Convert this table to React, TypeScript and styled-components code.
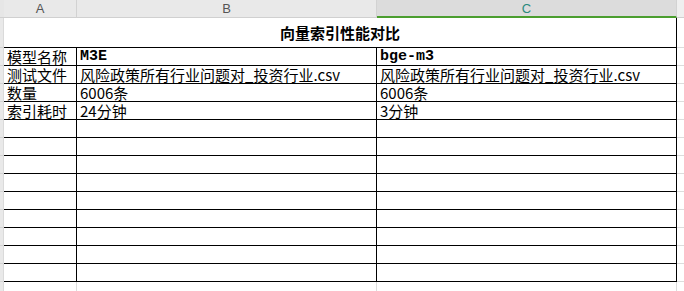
import React from 'react';
import styled, { createGlobalStyle, css } from 'styled-components';

const GlobalStyle = createGlobalStyle`
  *, *::before, *::after {
    box-sizing: border-box;
  }
  body {
    margin: 0;
    background: #ffffff;
    overflow: hidden;
  }
`;

const LINE = '#000000';
const GRID_LINE = '#dcdcdc';

// spreadsheet body: row strip | A | B | C | D (cut off)
const Sheet = styled.div`
  display: grid;
  grid-template-columns: 4px 73px 300px 300px 1fr;
  grid-template-rows: 18px 30px repeat(13, 18px) 1fr;
  width: 684px;
  height: 291px;
  font-family: 'Noto Sans CJK SC', 'Noto Sans', sans-serif;
  font-size: 15px;
  color: #000;
  background: #fff;
`;

const Corner = styled.div`
  background: #e6e6e6;
  border-bottom: 1px solid #d0d0d0;
`;

const ColHead = styled.div<{ $active?: boolean; $faded?: boolean }>`
  display: flex;
  align-items: center;
  justify-content: center;
  font-family: 'Liberation Sans', Arial, sans-serif;
  font-size: 13px;
  line-height: 15px;
  color: #555;
  background: #e9e9e9;
  border-right: 1px solid #d2d2d2;
  border-bottom: 1px solid #d0d0d0;
  padding-bottom: 1px;
  ${({ $active }) =>
    $active &&
    css`
      background: #dcdcdc;
      color: #2b8a7c;
      border-bottom: 2px solid #4b9e2f;
      padding-bottom: 0;
    `}
  ${({ $faded }) =>
    $faded &&
    css`
      background: #efefef;
      border-right: none;
    `}
`;

const RowHead = styled.div<{ $plain?: boolean }>`
  background: #e9e9e9;
  border-right: 1px solid #dadada;
  border-bottom: ${({ $plain }) => ($plain ? 'none' : '1px solid #d4d4d4')};
`;

const TitleCell = styled.div`
  grid-column: 2 / 5;
  display: flex;
  align-items: center;
  justify-content: center;
  font-weight: 700;
  font-size: 15px;
  line-height: 20px;
  border-right: 1px solid ${LINE};
  border-bottom: 1px solid ${LINE};
`;

const Cell = styled.div<{ $mono?: boolean }>`
  display: flex;
  align-items: center;
  padding: 0 0 0 3px;
  line-height: 16px;
  white-space: nowrap;
  border-right: 1px solid ${LINE};
  border-bottom: 1px solid ${LINE};
  ${({ $mono }) =>
    $mono &&
    css`
      font-family: 'Liberation Mono', 'Courier New', monospace;
      font-weight: 700;
      font-size: 15px;
    `}
`;

// unbordered cells below and beside the table
const Blank = styled.div<{ $edge?: boolean }>`
  border-right: ${({ $edge }) => ($edge ? 'none' : `1px solid ${GRID_LINE}`)};
`;

const OuterCell = styled.div`
  border-bottom: 1px solid ${GRID_LINE};
`;

type Row = [string, string, string, boolean?];

const rows: Row[] = [
  ['模型名称', 'M3E', 'bge-m3', true],
  ['测试文件', '风险政策所有行业问题对_投资行业.csv', '风险政策所有行业问题对_投资行业.csv'],
  ['数量', '6006条', '6006条'],
  ['索引耗时', '24分钟', '3分钟'],
];

const EMPTY_ROWS = 9;

export default function App() {
  const filled: Row[] = [
    ...rows,
    ...Array.from({ length: EMPTY_ROWS }, (): Row => ['', '', '']),
  ];

  return (
    <>
      <GlobalStyle />
      <Sheet>
        <Corner />
        <ColHead>A</ColHead>
        <ColHead>B</ColHead>
        <ColHead $active>C</ColHead>
        <ColHead $faded />

        <RowHead />
        <TitleCell>向量索引性能对比</TitleCell>
        <OuterCell />

        {filled.map(([label, left, right, mono], i) => (
          <React.Fragment key={i}>
            <RowHead />
            <Cell>{label}</Cell>
            <Cell $mono={mono}>{left}</Cell>
            <Cell $mono={mono}>{right}</Cell>
            <OuterCell />
          </React.Fragment>
        ))}

        <RowHead $plain />
        <Blank />
        <Blank />
        <Blank />
        <Blank $edge />
      </Sheet>
    </>
  );
}
